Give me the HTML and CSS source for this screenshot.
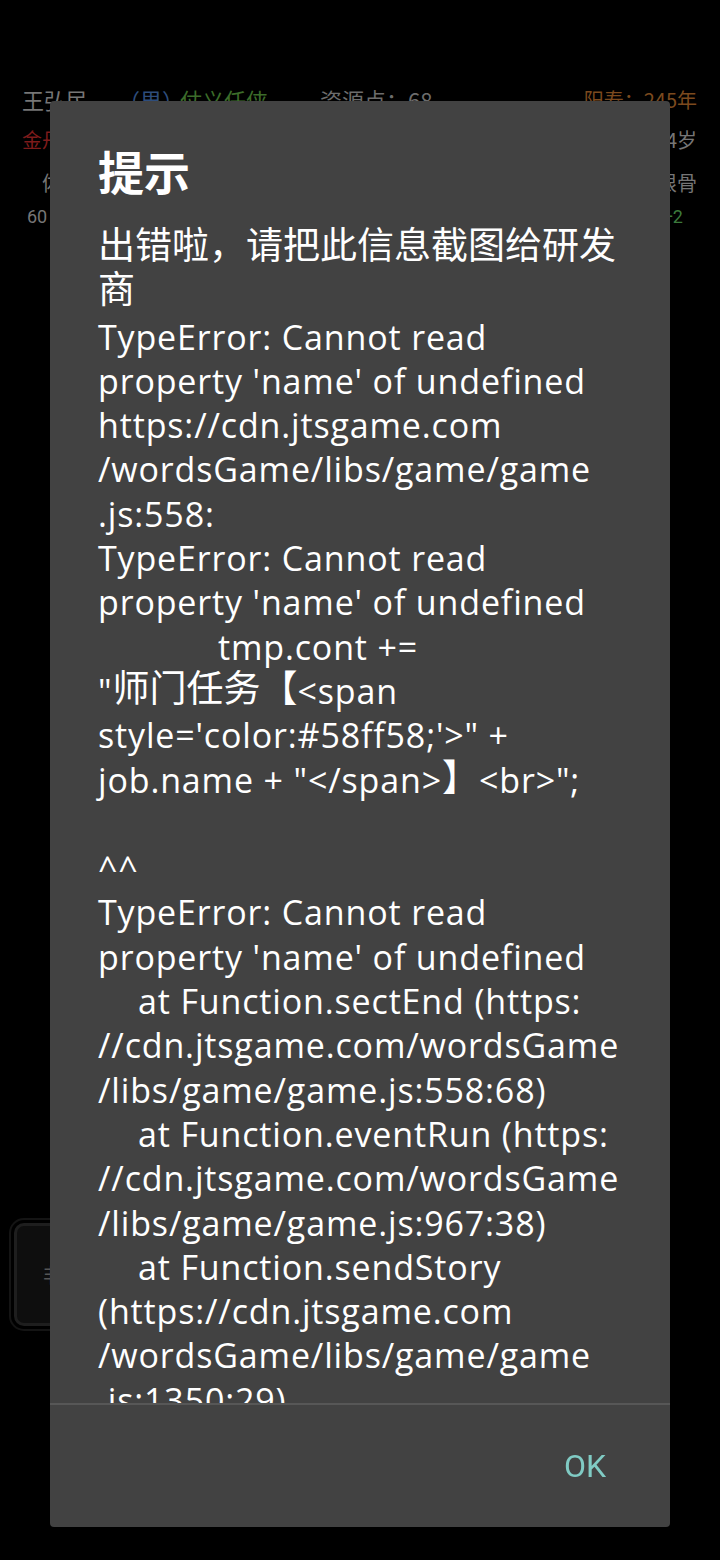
FILE: index.html
```html
<!DOCTYPE html>
<html>
  <head>
    <meta charset="utf-8">
    <title>提示</title>
    <link rel="stylesheet" href="styles.css">
  </head>
  <body>
    <div class="page">
      <div class="row row1">
        <span class="name">王弘民</span>
        <span class="sex">（男）</span>
        <span class="trait">仗义任侠</span>
        <span class="res">资源点：68</span>
        <span class="life">阳寿：245年</span>
      </div>
      <div class="row row2">
        <span class="realm">金丹</span>
        <span class="age">24岁</span>
      </div>
      <div class="row row3">
        <span class="attr">体魄</span>
        <span class="attr-r">根骨</span>
      </div>
      <div class="row row4">
        <span class="num">60</span>
        <span class="plus">+2</span>
      </div>
      <div class="side-btn"><span>非</span></div>
    </div>

    <div class="dialog">
      <div class="dlg-body">
        <div class="dlg-title">提示</div>
        <div class="msg"><span class="zh">出错啦，请把此信息截图给研发</span>
<span class="zh">商</span>
TypeError: Cannot read
property 'name' of undefined
https://cdn.jtsgame.com
/wordsGame/libs/game/game
.js:558:
TypeError: Cannot read
property 'name' of undefined
<span class="ind2"></span>tmp.cont +=
"<span class="zh">师门任务【</span>&lt;span
style='color:#58ff58;'&gt;" +
job.name + "&lt;/span&gt;<span class="zh">】</span>&lt;br&gt;";

^^
TypeError: Cannot read
property 'name' of undefined
<span class="ind1"></span>at Function.sectEnd (https:
//cdn.jtsgame.com/wordsGame
/libs/game/game.js:558:68)
<span class="ind1"></span>at Function.eventRun (https:
//cdn.jtsgame.com/wordsGame
/libs/game/game.js:967:38)
<span class="ind1"></span>at Function.sendStory
(https://cdn.jtsgame.com
/wordsGame/libs/game/game
.js:1350:29)</div>
      </div>
      <div class="dlg-actions">
        <button class="ok">OK</button>
      </div>
    </div>
  </body>
</html>
```

FILE: styles.css
```css
html, body {
  margin: 0;
  padding: 0;
  background: #000;
  height: 100%;
}
body {
  font-family: Roboto, "Noto Sans CJK SC", sans-serif;
  overflow: hidden;
}

.page {
  padding-top: 84px;
  font-family: "Noto Sans CJK SC", sans-serif;
  color: #767676;
}
.row {
  display: flex;
  align-items: center;
  padding: 0 23px 0 22px;
}
.row1 {
  height: 30px;
  font-size: 22px;
}
.row1 .sex {
  color: #2e4d7c;
  margin-left: 30px;
}
.row1 .trait {
  color: #3c6c2a;
  margin-left: -4px;
}
.row1 .res {
  margin-left: 52px;
  color: #6c6c6c;
}
.row1 .life {
  margin-left: auto;
  color: #7c4a1e;
  font-size: 20px;
}
.row2 {
  height: 50px;
  font-size: 20px;
}
.row2 .realm {
  color: #7e1b1b;
}
.row2 .age {
  margin-left: auto;
}
.row3 {
  height: 36px;
  font-size: 20px;
  padding-left: 42px;
}
.row3 .attr-r {
  margin-left: auto;
}
.row4 {
  height: 32px;
  font-size: 18px;
  padding-left: 27px;
  padding-right: 37px;
}
.row4 .num {
  font-family: Roboto, sans-serif;
}
.row4 .plus {
  margin-left: auto;
  color: #3c7a3c;
  font-family: Roboto, sans-serif;
}
.side-btn {
  margin: 991px 0 0 14px;
  width: 80px;
  height: 103px;
  border: 3px solid #1e1e1e;
  border-radius: 10px;
  outline: 2px solid #141414;
  outline-offset: 3px;
  background: #0e0e0e;
  display: flex;
  align-items: center;
  padding-left: 26px;
  box-sizing: border-box;
  color: #555;
  font-size: 20px;
}

.dialog {
  position: fixed;
  left: 50px;
  top: 101px;
  width: 620px;
  height: 1426px;
  background: #424242;
  border-radius: 4px;
  display: flex;
  flex-direction: column;
}
.dlg-body {
  flex: 1;
  overflow: hidden;
  padding: 41px 40px 0 48px;
  border-bottom: 2px solid #575757;
}
.dlg-title {
  color: #fff;
  font-size: 46px;
  font-weight: bold;
  line-height: 56px;
  font-family: "Noto Sans CJK SC", sans-serif;
}
.msg {
  margin-top: 28px;
  color: #fff;
  font-family: "Open Sans", "Noto Sans CJK SC", sans-serif;
  font-size: 34px;
  letter-spacing: 0.85px;
  line-height: 44.3px;
  white-space: pre;
}
.msg .zh {
  font-family: "Noto Sans CJK SC", sans-serif;
  font-size: 37px;
  letter-spacing: 0;
  line-height: 0;
  vertical-align: 2px;
}
.ind1 {
  display: inline-block;
  width: 40px;
}
.ind2 {
  display: inline-block;
  width: 120px;
}
.dlg-actions {
  height: 122px;
  display: flex;
  align-items: center;
  justify-content: flex-end;
  padding-right: 52px;
}
.ok {
  background: none;
  border: none;
  color: #80cbc4;
  font-family: Roboto, sans-serif;
  font-size: 32px;
  padding: 8px 12px;
}
```
